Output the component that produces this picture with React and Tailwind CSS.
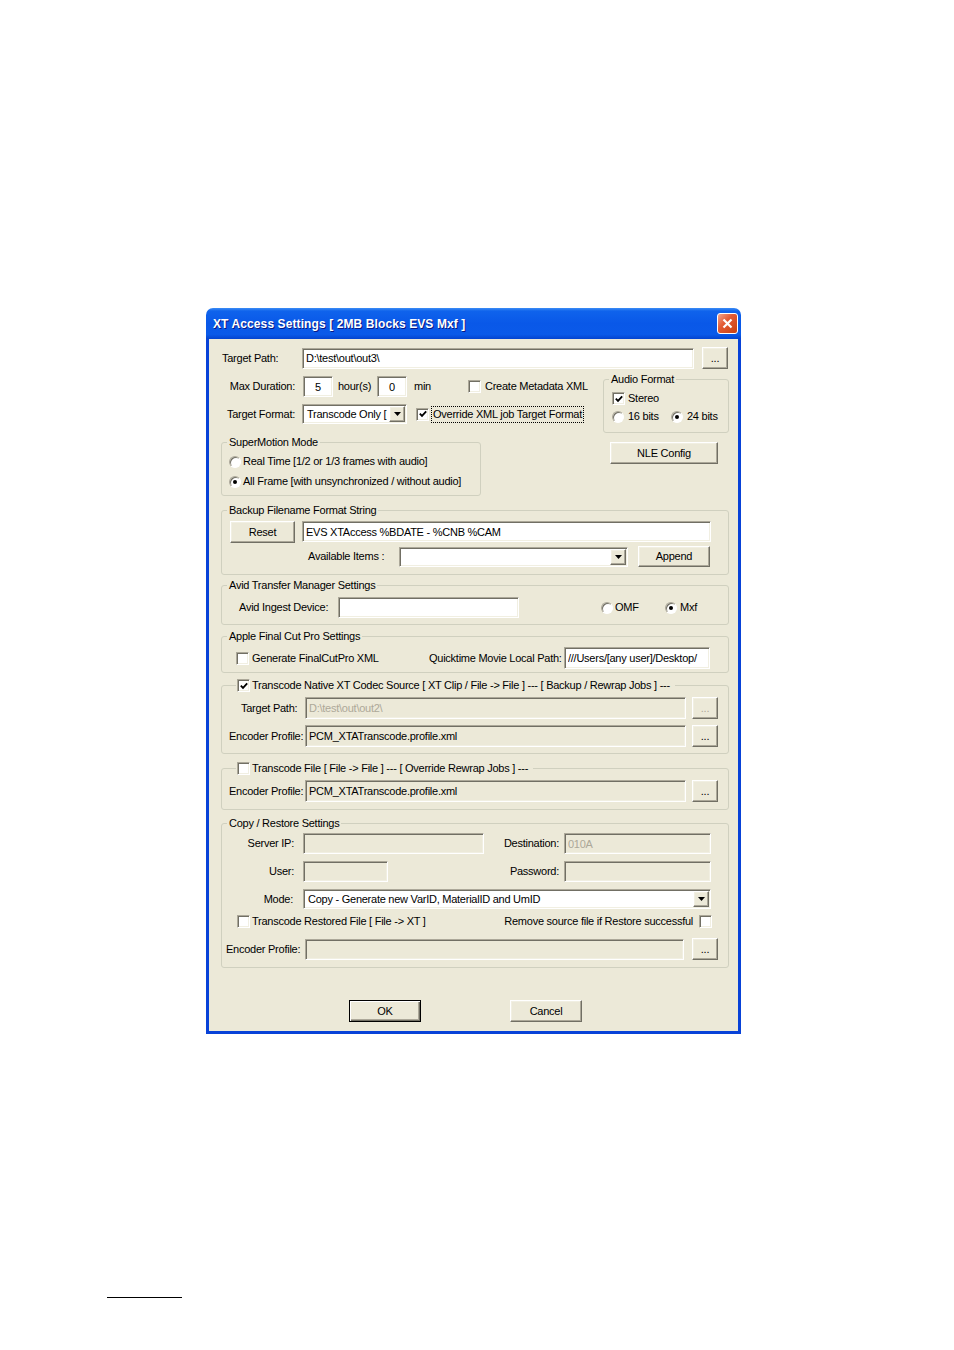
import React from "react";

const sunken =
  "border border-t-[#aca899] border-l-[#aca899] border-b-white border-r-white shadow-[inset_1px_1px_0_#716f64,inset_-1px_-1px_0_#f1efe2]";
const raised =
  "bg-[#ece9d8] border border-t-white border-l-white border-b-[#716f64] border-r-[#716f64] shadow-[inset_-1px_-1px_0_#aca899,inset_1px_1px_0_#f1efe2]";
const defBtn =
  "bg-[#ece9d8] border border-black shadow-[inset_1px_1px_0_#fff,inset_-1px_-1px_0_#716f64,inset_-2px_-2px_0_#aca899]";

function Field({ className = "", value = "", beige, dim, center }) {
  return (
    <input
      readOnly
      value={value}
      className={`block shrink-0 outline-none ${sunken} ${
        beige ? "bg-[#ece9d8]" : "bg-white"
      } ${dim ? "text-[#aca899]" : "text-black"} ${
        center ? "text-center" : "pl-[3px]"
      } ${className}`}
    />
  );
}

function Btn({ className = "", children, disabled, def }) {
  return (
    <button
      type="button"
      className={`flex shrink-0 items-center justify-center ${def ? defBtn : raised} ${
        disabled ? "text-[#aca899]" : "text-black"
      } ${className}`}
    >
      {children}
    </button>
  );
}

function Check({ checked, className = "" }) {
  return (
    <span
      className={`flex h-[13px] w-[13px] shrink-0 items-center justify-center bg-white ${sunken} ${className}`}
    >
      {checked && (
        <svg width="8" height="8" viewBox="0 0 8 8">
          <path d="M0.8 3.6L3 5.9L7.2 1.4" fill="none" stroke="#000" strokeWidth="1.8" />
        </svg>
      )}
    </span>
  );
}

function Radio({ checked, className = "" }) {
  return (
    <span
      className={`flex h-[12px] w-[12px] shrink-0 items-center justify-center rounded-full bg-white border border-t-[#aca899] border-l-[#aca899] border-b-white border-r-white shadow-[inset_1px_1px_0_#716f64] ${className}`}
    >
      {checked && <span className="h-[4px] w-[4px] rounded-full bg-black" />}
    </span>
  );
}

function Combo({ className = "", text = "" }) {
  return (
    <div className={`flex shrink-0 items-stretch bg-white p-px ${sunken} ${className}`}>
      <span className="flex flex-1 items-center overflow-hidden whitespace-nowrap pl-[3px]">
        {text}
      </span>
      <span className={`flex w-[16px] items-center justify-center ${raised}`}>
        <svg width="7" height="4" viewBox="0 0 7 4">
          <path d="M0 0H7L3.5 4Z" fill="#000" />
        </svg>
      </span>
    </div>
  );
}

function Group({ className = "", legend, legendClass = "ml-[5px] px-[2px]", children }) {
  return (
    <div className={`shrink-0 rounded-[3px] border border-[#d0d0bf] ${className}`}>
      <div
        className={`-mt-[7px] flex h-[13px] w-fit items-center whitespace-nowrap bg-[#ece9d8] ${legendClass}`}
      >
        {legend}
      </div>
      {children}
    </div>
  );
}

function Dialog() {
  return (
    <div className="w-[535px]">
      {/* title bar */}
      <div className="flex h-[31px] items-center rounded-t-[7px] bg-[linear-gradient(180deg,#3b8cf5_0%,#0f63ec_10%,#0958e8_50%,#0a5ae9_85%,#0444cf_100%)] pl-[7px] pr-[3px]">
        <span className="flex-1 whitespace-nowrap pt-[2px] text-[12px] font-bold tracking-[0.1px] text-white [text-shadow:1px_1px_0_#0a1883]">
          XT Access Settings [ 2MB Blocks EVS Mxf ]
        </span>
        <span className="flex h-[21px] w-[21px] items-center justify-center rounded-[3px] border border-white bg-[linear-gradient(135deg,#f3a58d_0%,#e35b35_40%,#c9400f_100%)]">
          <svg width="11" height="11" viewBox="0 0 11 11">
            <path d="M1.5 1.5L9.5 9.5M9.5 1.5L1.5 9.5" stroke="#fff" strokeWidth="2.2" />
          </svg>
        </span>
      </div>

      <div className="flex h-[695px] flex-col border-x-[3px] border-b-[3px] border-[#0842d8] bg-[#ece9d8] whitespace-nowrap tracking-[-0.25px]">
        {/* target path */}
        <div className="mt-[8px] flex h-[22px] items-center">
          <span className="ml-[13px] w-[80px]">Target Path:</span>
          <Field className="h-[21px] w-[392px]" value={"D:\\test\\out\\out3\\"} />
          <Btn className="ml-[8px] h-[22px] w-[26px]">...</Btn>
        </div>

        {/* duration / format / audio */}
        <div className="mt-[7px] flex items-start">
          <div className="w-[394px] shrink-0">
            <div className="flex h-[21px] items-center">
              <span className="w-[86px] text-right">Max Duration:</span>
              <Field className="ml-[8px] h-[21px] w-[30px]" value="5" center />
              <span className="ml-[5px] w-[39px]">hour(s)</span>
              <Field className="h-[21px] w-[30px]" value="0" center />
              <span className="ml-[7px] w-[54px]">min</span>
              <Check />
              <span className="ml-[4px]">Create Metadata XML</span>
            </div>
            <div className="mt-[7px] flex h-[20px] items-center">
              <span className="w-[86px] text-right">Target Format:</span>
              <Combo className="ml-[7px] h-[20px] w-[105px]" text="Transcode Only [" />
              <Check checked className="ml-[9px]" />
              <span className="ml-[2px] border border-dotted border-black px-px py-px">
                Override XML job Target Format
              </span>
            </div>
          </div>
          <Group className="mt-[3px] h-[54px] w-[126px]" legend="Audio Format">
            <div className="mt-[6px] flex h-[13px] items-center">
              <Check checked className="ml-[8px]" />
              <span className="ml-[3px]">Stereo</span>
            </div>
            <div className="mt-[5px] flex h-[13px] items-center">
              <Radio className="ml-[8px]" />
              <span className="ml-[4px] w-[43px]">16 bits</span>
              <Radio checked />
              <span className="ml-[4px]">24 bits</span>
            </div>
          </Group>
        </div>

        {/* supermotion + NLE */}
        <div className="mt-[9px] flex items-start">
          <Group className="ml-[12px] h-[54px] w-[260px]" legend="SuperMotion Mode">
            <div className="mt-[6px] flex h-[13px] items-center">
              <Radio className="ml-[7px]" />
              <span className="ml-[2px]">Real Time [1/2 or 1/3 frames with audio]</span>
            </div>
            <div className="mt-[7px] flex h-[13px] items-center">
              <Radio checked className="ml-[7px]" />
              <span className="ml-[2px]">All Frame [with unsynchronized / without audio]</span>
            </div>
          </Group>
          <Btn className="ml-[129px] h-[22px] w-[108px]">NLE Config</Btn>
        </div>

        {/* backup filename */}
        <Group className="ml-[12px] mt-[14px] h-[65px] w-[508px]" legend="Backup Filename Format String">
          <div className="mt-[4px] flex h-[22px] items-start">
            <Btn className="ml-[8px] h-[22px] w-[65px]">Reset</Btn>
            <Field className="ml-[7px] h-[21px] w-[409px]" value="EVS XTAccess %BDATE - %CNB %CAM" />
          </div>
          <div className="mt-[3px] flex h-[21px] items-center">
            <span className="ml-[86px] w-[91px]">Available Items :</span>
            <Combo className="h-[20px] w-[229px]" />
            <Btn className="ml-[10px] h-[21px] w-[72px]">Append</Btn>
          </div>
        </Group>

        {/* avid */}
        <Group className="ml-[12px] mt-[10px] h-[40px] w-[508px]" legend="Avid Transfer Manager Settings">
          <div className="mt-[5px] flex h-[21px] items-center">
            <span className="ml-[17px] w-[99px]">Avid Ingest Device:</span>
            <Field className="h-[21px] w-[181px]" />
            <Radio className="ml-[82px]" />
            <span className="ml-[2px] w-[50px]">OMF</span>
            <Radio checked />
            <span className="ml-[3px]">Mxf</span>
          </div>
        </Group>

        {/* final cut */}
        <Group className="ml-[12px] mt-[11px] h-[37px] w-[508px]" legend="Apple Final Cut Pro Settings">
          <div className="mt-[4px] flex h-[22px] items-center">
            <Check className="ml-[14px]" />
            <span className="ml-[3px] w-[177px]">Generate FinalCutPro XML</span>
            <span className="w-[135px] pr-[6px] text-right">Quicktime Movie Local Path:</span>
            <Field className="h-[22px] w-[146px]" value="///Users/[any user]/Desktop/" />
          </div>
        </Group>

        {/* transcode native */}
        <Group
          className="ml-[12px] mt-[12px] h-[69px] w-[508px]"
          legendClass="ml-[14px] pl-px pr-[5px]"
          legend={
            <>
              <Check checked />
              <span className="ml-[2px]">
                Transcode Native XT Codec Source [ XT Clip / File {"->"} File ] --- [ Backup / Rewrap Jobs ] ---
              </span>
            </>
          }
        >
          <div className="mt-[5px] flex h-[22px] items-center">
            <span className="ml-[19px] w-[64px]">Target Path:</span>
            <Field className="h-[22px] w-[381px]" beige dim value={"D:\\test\\out\\out2\\"} />
            <Btn disabled className="ml-[6px] h-[22px] w-[26px]">...</Btn>
          </div>
          <div className="mt-[6px] flex h-[22px] items-center">
            <span className="ml-[7px] w-[76px]">Encoder Profile:</span>
            <Field className="h-[22px] w-[381px]" beige value="PCM_XTATranscode.profile.xml" />
            <Btn className="ml-[6px] h-[22px] w-[26px]">...</Btn>
          </div>
        </Group>

        {/* transcode file */}
        <Group
          className="ml-[12px] mt-[14px] h-[42px] w-[508px]"
          legendClass="ml-[14px] pl-px pr-[5px]"
          legend={
            <>
              <Check />
              <span className="ml-[2px]">
                Transcode File [ File {"->"} File ] --- [ Override Rewrap Jobs ] ---
              </span>
            </>
          }
        >
          <div className="mt-[5px] flex h-[22px] items-center">
            <span className="ml-[7px] w-[76px]">Encoder Profile:</span>
            <Field className="h-[22px] w-[381px]" beige value="PCM_XTATranscode.profile.xml" />
            <Btn className="ml-[6px] h-[22px] w-[26px]">...</Btn>
          </div>
        </Group>

        {/* copy / restore */}
        <Group className="ml-[12px] mt-[13px] h-[145px] w-[508px]" legend="Copy / Restore Settings">
          <div className="mt-[3px] flex h-[21px] items-center">
            <span className="w-[72px] text-right">Server IP:</span>
            <Field className="ml-[9px] h-[21px] w-[181px]" beige />
            <span className="w-[75px] text-right">Destination:</span>
            <Field className="ml-[5px] h-[21px] w-[147px]" beige dim value="010A" />
          </div>
          <div className="mt-[7px] flex h-[21px] items-center">
            <span className="w-[72px] text-right">User:</span>
            <Field className="ml-[9px] h-[21px] w-[85px]" beige />
            <span className="w-[171px] text-right">Password:</span>
            <Field className="ml-[5px] h-[21px] w-[147px]" beige />
          </div>
          <div className="mt-[7px] flex h-[20px] items-center">
            <span className="w-[71px] text-right">Mode:</span>
            <Combo
              className="ml-[10px] h-[20px] w-[408px]"
              text="Copy - Generate new VarID, MaterialID and UmID"
            />
          </div>
          <div className="mt-[6px] flex h-[13px] w-[490px] items-center">
            <Check className="ml-[15px]" />
            <span className="ml-[2px]">Transcode Restored File [ File {"->"} XT ]</span>
            <span className="ml-auto">Remove source file if Restore successful</span>
            <Check className="ml-[6px]" />
          </div>
          <div className="mt-[10px] flex h-[22px] items-center">
            <span className="ml-[4px] w-[79px]">Encoder Profile:</span>
            <Field className="h-[21px] w-[379px]" beige />
            <Btn className="ml-[8px] h-[22px] w-[26px]">...</Btn>
          </div>
        </Group>

        {/* ok / cancel */}
        <div className="mt-[32px] flex h-[22px]">
          <Btn def className="ml-[140px] h-[22px] w-[72px]">OK</Btn>
          <Btn className="ml-[89px] h-[22px] w-[72px]">Cancel</Btn>
        </div>
      </div>
    </div>
  );
}

export default function App() {
  return (
    <div className="h-[1350px] w-[954px] overflow-hidden bg-white font-['Liberation_Sans',Arial,sans-serif] text-[11px] leading-[13px] text-black">
      <div className="pl-[206px] pt-[308px]">
        <Dialog />
      </div>
      <div className="ml-[107px] mt-[263px] h-px w-[75px] bg-black" />
    </div>
  );
}
